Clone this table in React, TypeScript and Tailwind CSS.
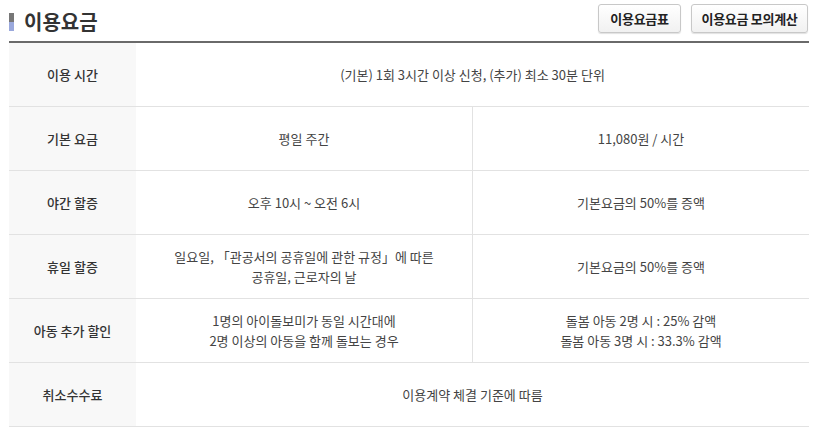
import type { ReactNode } from "react"

const font = { fontFamily: '"Noto Sans CJK KR", "Noto Sans", sans-serif' }

type Row = {
  label: string
  left: ReactNode
  right?: ReactNode
}

const rows: Row[] = [
  { label: "이용 시간", left: "(기본) 1회 3시간 이상 신청, (추가) 최소 30분 단위" },
  { label: "기본 요금", left: "평일 주간", right: "11,080원 / 시간" },
  { label: "야간 할증", left: "오후 10시 ~ 오전 6시", right: "기본요금의 50%를 증액" },
  {
    label: "휴일 할증",
    left: (
      <>
        일요일, 「관공서의 공휴일에 관한 규정」에 따른
        <br />
        공휴일, 근로자의 날
      </>
    ),
    right: "기본요금의 50%를 증액",
  },
  {
    label: "아동 추가 할인",
    left: (
      <>
        1명의 아이돌보미가 동일 시간대에
        <br />
        2명 이상의 아동을 함께 돌보는 경우
      </>
    ),
    right: (
      <>
        돌봄 아동 2명 시 : 25% 감액
        <br />
        돌봄 아동 3명 시 : 33.3% 감액
      </>
    ),
  },
  { label: "취소수수료", left: "이용계약 체결 기준에 따름" },
]

function HeadButton({ width, children }: { width: string; children: ReactNode }) {
  return (
    <button
      className={`${width} h-[29px] rounded-[3px] border border-[#c8c8c8] bg-gradient-to-b from-white to-[#f1f1f1] shadow-[0_1px_1px_rgba(0,0,0,0.12)] text-[13px] font-semibold text-[#222] leading-none whitespace-nowrap tracking-[-0.3px]`}
    >
      {children}
    </button>
  )
}

export default function App() {
  return (
    <div className="w-[823px] h-[433px] bg-white pl-[9px]" style={font}>
      <div className="w-[800px]">
        <div className="flex items-center justify-between h-[41px]">
          <div className="flex items-center gap-[10px] pt-[2px]">
            <div className="flex flex-col w-[5px]">
              <div className="h-[9px] bg-[#777]" />
              <div className="h-[9px] bg-[#9aa8dc]" />
            </div>
            <h1 className="text-[20px] font-bold text-[#333] leading-none">이용요금</h1>
          </div>
          <div className="flex items-center gap-[10px] pb-[5px] pr-[1px]">
            <HeadButton width="w-[83px]">이용요금표</HeadButton>
            <HeadButton width="w-[117px]">이용요금 모의계산</HeadButton>
          </div>
        </div>
        <div className="border-t-2 border-[#6a6a6a]">
          {rows.map((row) => (
            <div key={row.label} className="flex h-[64px] border-b border-[#e2e2e2]">
              <div className="w-[127px] shrink-0 bg-[#f8f8f8] flex items-center justify-center text-[13px] font-medium text-[#333]">
                {row.label}
              </div>
              {row.right ? (
                <>
                  <div className="w-[336px] flex items-center justify-center text-center text-[13px] leading-[20px] text-[#444]">
                    <span>{row.left}</span>
                  </div>
                  <div className="flex-1 border-l border-[#e2e2e2] flex items-center justify-center text-center text-[13px] leading-[20px] text-[#444]">
                    <span>{row.right}</span>
                  </div>
                </>
              ) : (
                <div className="flex-1 flex items-center justify-center text-center text-[13px] leading-[20px] text-[#444]">
                  <span>{row.left}</span>
                </div>
              )}
            </div>
          ))}
        </div>
      </div>
    </div>
  )
}
